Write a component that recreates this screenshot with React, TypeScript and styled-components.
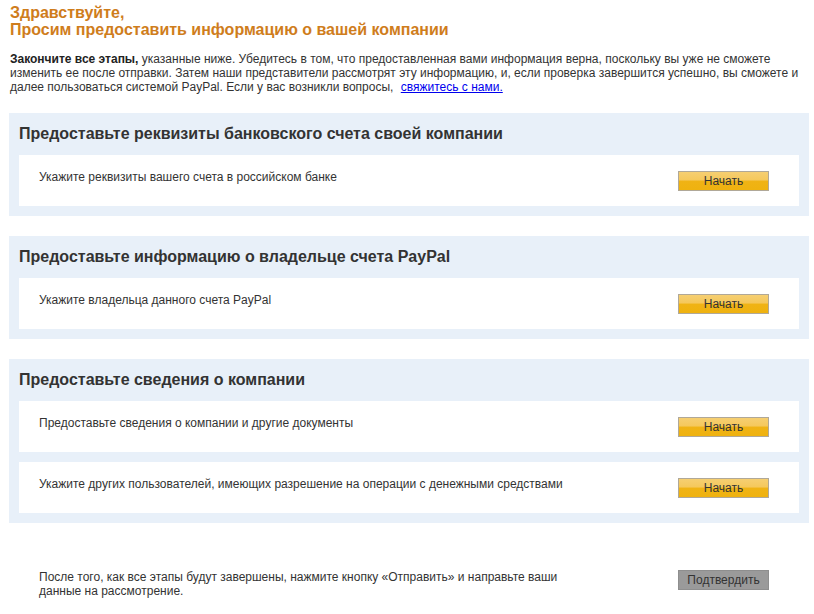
import styled, { createGlobalStyle } from "styled-components";

const GlobalStyle = createGlobalStyle`
  body {
    margin: 0;
    background: #fff;
    font-family: "Liberation Sans", Arial, Helvetica, sans-serif;
    color: #333;
  }
`;

const Page = styled.div`
  width: 814px;
  padding: 4px 0 0 9px;
  box-sizing: border-box;
`;

const Title = styled.h1`
  margin: 0 0 0 1px;
  font-size: 16px;
  line-height: 17px;
  font-weight: bold;
  color: #cf7d1c;
`;

const Intro = styled.p`
  margin: 14px 0 0 1px;
  font-size: 12px;
  line-height: 14px;
  color: #333;
  b {
    color: #222;
  }
  a {
    color: #0000ee;
    margin-left: 4px;
  }
`;

const Section = styled.section<{ $top: number }>`
  width: 800px;
  margin-top: ${(p) => p.$top}px;
  background: #e8f0f9;
  padding: 0 10px 10px;
  box-sizing: border-box;
  display: flex;
  flex-direction: column;
  gap: 10px;
`;

const SectionTitle = styled.h2`
  margin: 0;
  height: 32px;
  padding-top: 12px;
  box-sizing: border-box;
  font-size: 16px;
  line-height: 18px;
  font-weight: bold;
  color: #333;
`;

const Card = styled.div`
  height: 51px;
  background: #fff;
  display: flex;
  justify-content: space-between;
  align-items: flex-start;
  padding: 0 30px 0 20px;
  box-sizing: border-box;
`;

const CardText = styled.span`
  padding-top: 15px;
  font-size: 12px;
  line-height: 14px;
  color: #333;
`;

const Button = styled.button<{ $gray?: boolean }>`
  width: 91px;
  height: 20px;
  margin-top: ${(p) => (p.$gray ? 0 : 16)}px;
  padding: 0;
  font-family: inherit;
  font-size: 12px;
  color: #333;
  cursor: pointer;
  border: 1px solid ${(p) => (p.$gray ? "#8e8e8e" : "#b0a898")};
  background: ${(p) =>
    p.$gray
      ? "#9a9a9a"
      : "linear-gradient(to bottom, #f6cf72 0%, #f5c85c 45%, #f0b315 50%, #efb20f 100%)"};
`;

const Footer = styled.div`
  width: 800px;
  margin-top: 47px;
  padding: 0 40px 0 30px;
  box-sizing: border-box;
  display: flex;
  justify-content: space-between;
  align-items: flex-start;
`;

const FooterText = styled.p`
  margin: 0;
  font-size: 12px;
  line-height: 14px;
  color: #333;
`;

const sections = [
  {
    top: 19,
    title: "Предоставьте реквизиты банковского счета своей компании",
    items: ["Укажите реквизиты вашего счета в российском банке"],
  },
  {
    top: 20,
    title: "Предоставьте информацию о владельце счета PayPal",
    items: ["Укажите владельца данного счета PayPal"],
  },
  {
    top: 20,
    title: "Предоставьте сведения о компании",
    items: [
      "Предоставьте сведения о компании и другие документы",
      "Укажите других пользователей, имеющих разрешение на операции с денежными средствами",
    ],
  },
];

export default function App() {
  return (
    <Page>
      <GlobalStyle />
      <Title>
        Здравствуйте,
        <br />
        Просим предоставить информацию о вашей компании
      </Title>
      <Intro>
        <b>Закончите все этапы,</b> указанные ниже. Убедитесь в том, что предоставленная вами информация верна, поскольку вы уже не сможете
        <br />
        изменить ее после отправки. Затем наши представители рассмотрят эту информацию, и, если проверка завершится успешно, вы сможете и
        <br />
        далее пользоваться системой PayPal. Если у вас возникли вопросы, <a href="#">свяжитесь с нами.</a>
      </Intro>
      {sections.map((s) => (
        <Section key={s.title} $top={s.top}>
          <SectionTitle>{s.title}</SectionTitle>
          {s.items.map((it) => (
            <Card key={it}>
              <CardText>{it}</CardText>
              <Button>Начать</Button>
            </Card>
          ))}
        </Section>
      ))}
      <Footer>
        <FooterText>
          После того, как все этапы будут завершены, нажмите кнопку «Отправить» и направьте ваши
          <br />
          данные на рассмотрение.
        </FooterText>
        <Button $gray>Подтвердить</Button>
      </Footer>
    </Page>
  );
}
